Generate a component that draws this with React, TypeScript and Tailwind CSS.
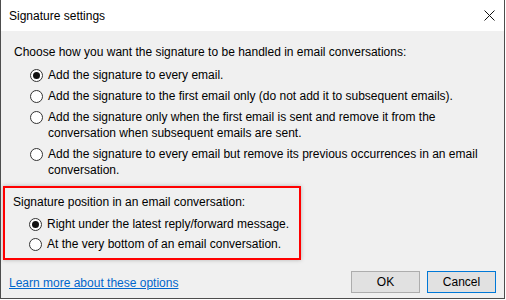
import React, { FC } from "react";

interface RadioProps {
  checked?: boolean;
  children: React.ReactNode;
}

const Radio: FC<RadioProps> = ({ checked, children }) => (
  <label className="flex items-start">
    <span className="mt-[2px] ml-[16px] flex h-[13px] w-[13px] shrink-0 items-center justify-center rounded-full border border-[#333333] bg-white">
      {checked && <span className="h-[7px] w-[7px] rounded-full bg-[#111111]" />}
    </span>
    <span className="ml-[5px]">{children}</span>
  </label>
);

const App: FC = () => {
  return (
    <div className="h-[300px] w-[506px] bg-white font-['Segoe_UI','Liberation_Sans',sans-serif] text-[12px] leading-[16px] text-black">
      <div className="flex h-[299px] w-[505px] flex-col border-x border-b border-[#4d4d4d]">
        {/* title bar */}
        <div className="flex h-[31px] shrink-0 items-center justify-between bg-white pl-[8px] pr-[8px]">
          <span>Signature settings</span>
          <svg width="11" height="11" viewBox="0 0 11 11" className="mr-[1px]">
            <path d="M0.5 0.5L10.5 10.5M10.5 0.5L0.5 10.5" stroke="#111" strokeWidth="1" />
          </svg>
        </div>

        {/* body */}
        <div className="flex flex-1 flex-col bg-[#f0f0f0] px-[2px] pt-[13px]">
          <p className="pl-[11px]">
            Choose how you want the signature to be handled in email conversations:
          </p>
          <div className="mt-[7px] flex flex-col gap-[5px] pl-[11px]">
            <Radio checked>Add the signature to every email.</Radio>
            <Radio>
              Add the signature to the first email only (do not add it to subsequent emails).
            </Radio>
            <Radio>
              Add the signature only when the first email is sent and remove it from the
              <br />
              conversation when subsequent emails are sent.
            </Radio>
            <Radio>
              Add the signature to every email but remove its previous occurrences in an email
              <br />
              conversation.
            </Radio>
          </div>

          <div className="mt-[8px] w-[298px] border-2 border-[#ff0000] pb-[6px] pl-[8px] pt-[6px] shadow-[0_0_4px_rgba(0,0,0,0.25)]">
            <p>Signature position in an email conversation:</p>
            <div className="mt-[6px] flex flex-col gap-[4px]">
              <Radio checked>Right under the latest reply/forward message.</Radio>
              <Radio>At the very bottom of an email conversation.</Radio>
            </div>
          </div>

          <div className="mt-auto mb-[5px] flex items-end justify-between pl-[6px] pr-[6px]">
            <a className="mb-[2px] text-[#0066cc] underline">Learn more about these options</a>
            <div className="flex gap-[7px]">
              <button className="h-[22px] w-[69px] border border-[#adadad] bg-[#e1e1e1]">OK</button>
              <button className="h-[22px] w-[69px] border border-[#0078d7] bg-[#e1e1e1]">Cancel</button>
            </div>
          </div>
        </div>
      </div>
    </div>
  );
};

export default App;
